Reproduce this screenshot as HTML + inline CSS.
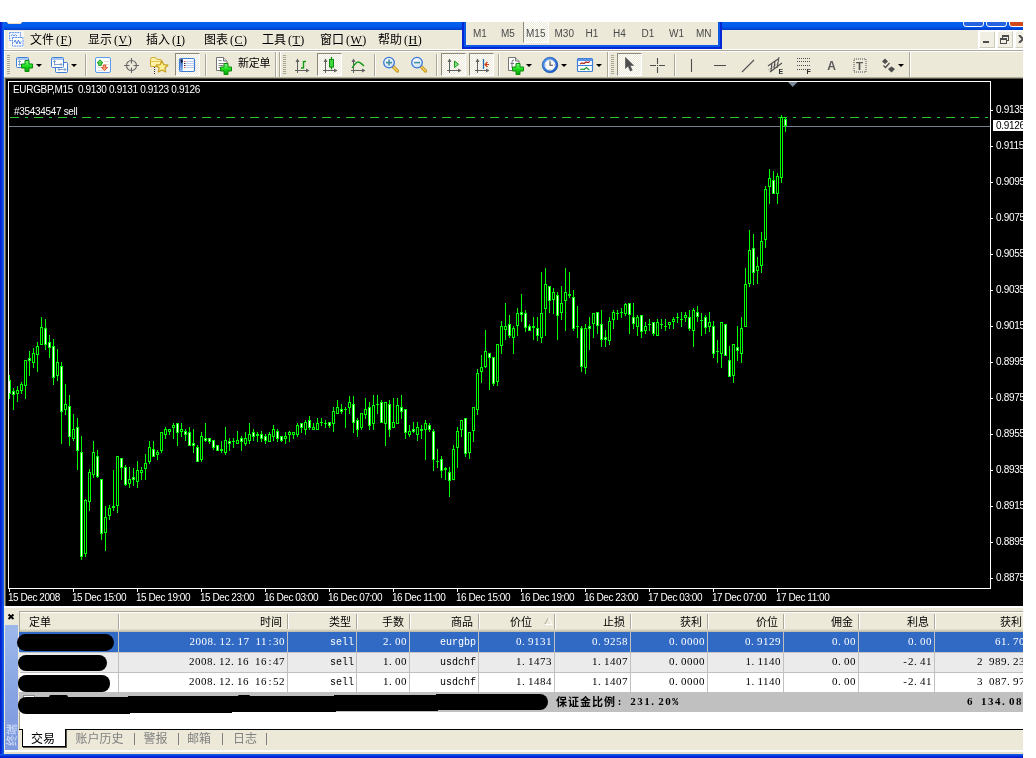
<!DOCTYPE html><html lang="zh"><head><meta charset="utf-8"><title>MetaTrader 4 - EURGBP,M15</title><style>
*{box-sizing:border-box;margin:0;padding:0}
html,body{width:1036px;height:758px;background:#fff;overflow:hidden}
body{position:relative;font-family:"Liberation Sans","Noto Sans CJK SC",sans-serif;font-size:11px;color:#000}
#app{will-change:transform;position:absolute;left:0;top:22px;width:1023px;height:736px;background:#ece9d8;overflow:hidden}
.abs{position:absolute}
.menu span{position:absolute;top:11px;font:12px/14px "Liberation Serif","Noto Sans CJK SC",sans-serif;white-space:nowrap;color:#000}
.menu span i{font-style:normal;font-family:"Liberation Serif",serif;font-size:12px;letter-spacing:.5px;margin-left:2px}
.menu span u{text-decoration:underline}
.tf span{position:absolute;top:6px;font:10px/12px "Liberation Sans",sans-serif;color:#4a4a4a;white-space:nowrap}
.hatch{position:absolute;background-color:#fff;background-image:conic-gradient(#ece9d8 25%,#fff 0 50%,#ece9d8 0 75%,#fff 0);background-size:2px 2px;border:1px solid;border-color:#8d8a7c #fff #fff #8d8a7c}
.vsep{position:absolute;top:32px;width:2px;height:22px;border-left:1px solid #aca899;border-right:1px solid #fdfdf8}
.grip{position:absolute;top:33px;width:3px;height:20px;background:repeating-linear-gradient(#a9a696 0 1px,#ece9d8 1px 2px)}
.dd{position:absolute;top:42px;width:0;height:0;border:3px solid transparent;border-top-color:#000;border-bottom-width:0}
.ct{position:absolute;font:10px/12px "Liberation Sans",sans-serif;letter-spacing:-.32px;color:#fff;white-space:nowrap}
.th{position:absolute;top:589px;height:20px;font:11px/22px "Liberation Sans","Noto Sans CJK SC",sans-serif;text-align:right;padding-right:6px;white-space:nowrap}
.th:after{content:"";box-sizing:border-box;position:absolute;right:-1px;top:3px;height:15px;width:2px;border-left:1px solid #aca899;border-right:1px solid #fff}
.row{position:absolute;left:19px;width:1004px;height:20px}
.td{position:absolute;top:0;height:20px;font:10px/22px "Liberation Mono","Noto Sans CJK SC",monospace;text-align:right;padding-right:2px;white-space:pre;border-right:1px solid #c0c0c0}
.d{font:normal 11px/22px "Liberation Serif",serif;letter-spacing:.5px;position:relative;top:-2px}.p{letter-spacing:3.25px}.c{letter-spacing:0;margin:0 1.47px}.m{letter-spacing:0;margin:0 1.17px}.e{font-weight:bold;letter-spacing:1.5px}.e.p{letter-spacing:4.25px}.e.c{letter-spacing:0;margin:0 1.84px 0 1.84px}
.blob{position:absolute;background:#000}
.tab{position:absolute;top:710px;font:12px/14px "Liberation Sans","Noto Sans CJK SC",sans-serif;color:#808080;white-space:nowrap}
</style></head><body><div id="app"><div class="abs" style="left:0;top:0;width:1023px;height:8px;background:linear-gradient(#0562f0 0,#0058ea 60%,#0047d8 85%,#003cc6 100%)"></div><div class="abs" style="left:0;top:0;width:4px;height:736px;background:linear-gradient(90deg,#0019cf,#0831d9 40%,#166aee)"></div><div class="abs" style="left:4px;top:8px;width:1px;height:724px;background:#fff"></div><div class="abs" style="left:0;top:732px;width:1023px;height:4px;background:linear-gradient(#166aee,#0831d9 50%,#0019cf)"></div><div class="abs" style="left:7px;top:-6px;width:15px;height:8px;background:#fff;border:1px solid #f0dcc0;border-radius:2px"></div><div class="abs" style="left:963px;top:-16px;width:21px;height:21px;background:#2663e0;border:1px solid #fff;border-radius:3px"></div><div class="abs" style="left:986px;top:-16px;width:21px;height:21px;background:#2663e0;border:1px solid #fff;border-radius:3px"></div><div class="abs" style="left:1009px;top:-16px;width:21px;height:21px;background:#d2481c;border:1px solid #fff;border-radius:3px"></div><div class="menu abs" style="left:0;top:0;width:1023px;height:28px"><span style="left:30px">文件<i>(<u>F</u>)</i></span><span style="left:88px">显示<i>(<u>V</u>)</i></span><span style="left:146px">插入<i>(<u>I</u>)</i></span><span style="left:204px">图表<i>(<u>C</u>)</i></span><span style="left:262px">工具<i>(<u>T</u>)</i></span><span style="left:320px">窗口<i>(<u>W</u>)</i></span><span style="left:378px">帮助<i>(<u>H</u>)</i></span></div><svg class="abs" style="left:8px;top:9px" width="16" height="17" viewBox="0 0 16 17"><rect x="0" y="0" width="16" height="17" fill="#f8f7f3"/><rect x="1.5" y="1.5" width="11" height="8" fill="#eef3ff" stroke="#6a9bec" stroke-dasharray="2 .6"/><path d="M3 5l1.500-1.500 1.500 1.500 1.500-1.500 1.500 1.500" fill="none" stroke="#5b8fe6" stroke-width=".9"/><rect x="4.5" y="6.5" width="10.500" height="8.500" fill="#fff" stroke="#5b8fe6" stroke-dasharray="2 .6"/><path d="M6 11.500l1.300-2.500 1.500 4 1.700-4 1.500 4 1.300-2.500" fill="none" stroke="#4f86e0" stroke-width="1"/></svg><div class="abs" style="left:978px;top:8px;width:45px;height:19px;background:#fff"></div><div class="abs" style="left:979px;top:9px;width:16px;height:17px;background:#f1efe4;border:1px solid;border-color:#fff #d0ccbc #d0ccbc #fff"></div><div class="abs" style="left:997px;top:9px;width:16px;height:17px;background:#f1efe4;border:1px solid;border-color:#fff #d0ccbc #d0ccbc #fff"></div><div class="abs" style="left:1015px;top:9px;width:16px;height:17px;background:#f1efe4;border:1px solid;border-color:#fff #d0ccbc #d0ccbc #fff"></div><div class="abs" style="left:983px;top:19px;width:6px;height:2px;background:#4d4d4d"></div><div class="abs" style="left:1002px;top:13px;width:7px;height:6px;border:1px solid #4d4d4d;border-top-width:2px"></div><div class="abs" style="left:1000px;top:16px;width:7px;height:6px;border:1px solid #4d4d4d;border-top-width:2px;background:#f1efe4"></div><svg class="abs" style="left:1018px;top:13px" width="8" height="8"><path d="M1 0l4 4-4 4" fill="none" stroke="#4d4d4d" stroke-width="2"/></svg><div class="abs" style="left:4px;top:27px;width:1019px;height:3px;background:#fff;border-top:0"></div><div class="abs" style="left:4px;top:28px;width:1019px;height:1px;background:#aca899"></div><div class="abs" style="left:462px;top:0;width:260px;height:27px;background:#0426d4"><div class="abs" style="left:2px;top:0;width:256px;height:25px;background:#0d58e6"></div><div class="tf abs" style="left:4px;top:0;width:252px;height:23px;background:#ece9d8"><div class="hatch" style="left:57px;top:-1px;width:26px;height:22px"></div><span style="left:7px">M1</span><span style="left:35px">M5</span><span style="left:60px">M15</span><span style="left:88.5px">M30</span><span style="left:119.5px">H1</span><span style="left:147px">H4</span><span style="left:175.5px">D1</span><span style="left:203px">W1</span><span style="left:230px">MN</span></div></div><div id="tb" class="abs" style="left:0;top:0;width:1023px;height:56px"><div class="grip" style="left:7px"></div><div class="grip" style="left:283px"></div><div class="grip" style="left:611px"></div><div class="vsep" style="left:85px"></div><div class="vsep" style="left:205px"></div><div class="vsep" style="left:374px"></div><div class="vsep" style="left:436px"></div><div class="vsep" style="left:498px"></div><div class="vsep" style="left:674px"></div><div class="abs" style="left:275px;top:30px;width:2px;height:25px;border-left:1px solid #aca899;border-right:1px solid #fff"></div><div class="abs" style="left:279px;top:30px;width:2px;height:25px;border-left:1px solid #aca899;border-right:1px solid #fff"></div><div class="abs" style="left:607px;top:30px;width:2px;height:25px;border-left:1px solid #aca899;border-right:1px solid #fff"></div><div class="abs" style="left:909px;top:30px;width:2px;height:25px;border-left:1px solid #aca899;border-right:1px solid #fff"></div><div class="dd" style="left:36px"></div><div class="dd" style="left:71px"></div><div class="dd" style="left:526px"></div><div class="dd" style="left:561px"></div><div class="dd" style="left:596px"></div><div class="dd" style="left:898px"></div><div class="hatch" style="left:175px;top:31px;width:25px;height:23px"></div><div class="hatch" style="left:317px;top:31px;width:25px;height:23px"></div><div class="hatch" style="left:441px;top:31px;width:25px;height:23px"></div><div class="hatch" style="left:469px;top:31px;width:25px;height:23px"></div><div class="hatch" style="left:617px;top:31px;width:25px;height:23px"></div></div><svg class="abs" style="left:0;top:29px" width="1023" height="27" viewBox="0 51 1023 27"><defs><linearGradient id="gp" x1="0" y1="0" x2="0" y2="1"><stop offset="0" stop-color="#7dff7d"/><stop offset=".5" stop-color="#1fdc1f"/><stop offset="1" stop-color="#0aa00a"/></linearGradient><linearGradient id="bl" x1="0" y1="0" x2="0" y2="1"><stop offset="0" stop-color="#9cc4f7"/><stop offset="1" stop-color="#3d7fdc"/></linearGradient><radialGradient id="lens" cx=".4" cy=".35" r=".7"><stop offset="0" stop-color="#fff"/><stop offset="1" stop-color="#c6dcf7"/></radialGradient></defs><rect x="16.5" y="57.5" width="12" height="10" rx="1" fill="#fff" stroke="#3f7fd6"/><rect x="17" y="58" width="11" height="2" fill="#a9c8f3"/><path d="M19.5 60.5v5M18 62l1.5-1.5L21 62M18 64l1.5 1.5L21 64" stroke="#7f9fc4" fill="none"/><path d="M25.0 60.5h4v3.500h3.500v4h-3.500v3.500h-4v-3.500h-3.500v-4h3.500z" fill="url(#gp)" stroke="#0b8a0b" stroke-width="1" stroke-linejoin="round"/><rect x="55.500" y="62.500" width="12" height="10" rx="1" fill="#fff" stroke="#3f7fd6"/><path d="M58 69.500h8M58 69.500l1.500-1.500M58 69.500l1.500 1.500M66 69.500l-1.500-1.500M66 69.500l-1.500 1.500" stroke="#7f9fc4" fill="none"/><rect x="51.500" y="57.500" width="12" height="10" rx="1" fill="#fff" stroke="#3f7fd6"/><rect x="52" y="58" width="11" height="2" fill="#a9c8f3"/><path d="M54.500 60.500v5M53 62l1.500-1.500L56 62M54 64.500h8M60.500 63l1.500 1.500-1.500 1.500" stroke="#7f9fc4" fill="none"/><rect x="95.500" y="57.500" width="15" height="15" rx="1.500" fill="#fff" stroke="#5b9bee"/><path d="M104 61.500h5M104 64.500h5M98 67.500h4M98 70.500h5" stroke="#dcdcdc"/><path d="M100 59.800l3 3.200h-1.700v2.500h-2.600v-2.500h-1.700z" fill="#5fd05f" stroke="#109a10" stroke-width=".9"/><path d="M104.500 70.700l-3-3.200h1.700v-2.500h2.600v2.500h1.700z" fill="#f6a080" stroke="#e0481a" stroke-width=".9"/><circle cx="131.500" cy="65.500" r="5" fill="none" stroke="#666" stroke-width="1.100"/><path d="M131.500 58v5.500M131.500 67.500v5.500M124 65.500h5.500M133.500 65.500h5.500" stroke="#666" stroke-width="1.100"/><path d="M150.500 59.500q0-2 2-2h3l1.500 2h4v7h-10.500z" fill="#fdf2a8" stroke="#cfa92e"/><path d="M150.500 61.500h10.500" stroke="#e0c255"/><path d="M154.500 67v7" stroke="#333" stroke-dasharray="1 1"/><path d="M162 61l1.800 3.700 4.100.5-3 2.800.8 4-3.700-2-3.700 2 .8-4-3-2.800 4.100-.5z" fill="#fdf09a" stroke="#c9a01c" stroke-width="1.200" stroke-linejoin="round"/><defs><linearGradient id="tc" x1="0" y1="0" x2="0" y2="1"><stop offset="0" stop-color="#10245c"/><stop offset=".35" stop-color="#3d6fc8"/><stop offset="1" stop-color="#7fb0f0"/></linearGradient></defs><rect x="179.500" y="58.500" width="15" height="13" rx="1.500" fill="#fff" stroke="#3f7fd6" stroke-width="1.200"/><rect x="180.200" y="59.200" width="2.600" height="11.600" fill="url(#tc)"/><rect x="181" y="60" width="1.400" height="2.500" fill="#111"/><path d="M185.500 61.500h8.500M185.500 63.500h8.500M185.500 65.500h8.500M185.500 67.500h8.500" stroke="#b9cdf0"/><path d="M184 61.500h1.300M184 67.500h1.300" stroke="#e8502a"/><path d="M184 63.500h1.300M184 65.500h1.300" stroke="#222"/><path d="M216.500 57.500h7l3.500 3.500v9.500h-10.500z" fill="#fff" stroke="#747474"/><path d="M223.500 57.500v3.500h3.500" fill="#ddd" stroke="#747474"/><path d="M218.500 60.500h3M218.500 63.500h6M218.500 65.500h5M218.500 67.500h3" stroke="#858585"/><path d="M224.0 63.5h4v3.500h3.500v4h-3.500v3.500h-4v-3.500h-3.500v-4h3.500z" fill="url(#gp)" stroke="#0b8a0b" stroke-width="1" stroke-linejoin="round"/><path d="M297.5 59V73M295 70.5H308" stroke="#606060" stroke-width="1" fill="none"/><path d="M295.5 62l2-3.5 2 3.5zM306 68.5l3.5 2-3.5 2z" fill="#606060"/><path d="M303.500 61v7.500M303.500 61.500h2.500M301 68h2.500" stroke="#169a16" stroke-width="1.400" fill="none"/><path d="M325.5 59V73M323 70.5H336" stroke="#606060" stroke-width="1" fill="none"/><path d="M323.5 62l2-3.5 2 3.5zM334 68.5l3.5 2-3.5 2z" fill="#606060"/><path d="M331.500 57v12.500" stroke="#0d8a0d" stroke-width="1.300"/><rect x="329.500" y="59.500" width="4" height="7.500" fill="#3fd83f" stroke="#0d8a0d"/><path d="M353.5 59V73M351 70.5H364" stroke="#606060" stroke-width="1" fill="none"/><path d="M351.5 62l2-3.5 2 3.5zM362 68.5l3.5 2-3.5 2z" fill="#606060"/><path d="M352 68q4-6 6-6t6 4" stroke="#169a16" stroke-width="1.300" fill="none"/><path d="M393 66.5l4.500 4.500" stroke="#c79a1c" stroke-width="3.200" stroke-linecap="round"/><path d="M393.3 66.8l4 4" stroke="#f3d467" stroke-width="1.300" stroke-linecap="round"/><circle cx="389" cy="62.600" r="5.300" fill="url(#lens)" stroke="#3b78d8" stroke-width="1.300"/><path d="M386 62.600h6M389 59.600v6" stroke="#3f8f9f" stroke-width="1.600"/><path d="M421 66.5l4.500 4.500" stroke="#c79a1c" stroke-width="3.200" stroke-linecap="round"/><path d="M421.3 66.8l4 4" stroke="#f3d467" stroke-width="1.300" stroke-linecap="round"/><circle cx="417" cy="62.600" r="5.300" fill="url(#lens)" stroke="#3b78d8" stroke-width="1.300"/><path d="M414 62.600h6" stroke="#3f8f9f" stroke-width="1.600"/><path d="M449.5 59V73M447 70.5H460" stroke="#606060" stroke-width="1" fill="none"/><path d="M447.5 62l2-3.5 2 3.5zM458 68.5l3.5 2-3.5 2z" fill="#606060"/><path d="M454.500 61l4 3.300-4 3.300z" fill="#7ee07e" stroke="#169a16"/><path d="M477.5 59V73M475 70.5H488" stroke="#606060" stroke-width="1" fill="none"/><path d="M475.5 62l2-3.5 2 3.5zM486 68.5l3.5 2-3.5 2z" fill="#606060"/><path d="M483.500 59v10" stroke="#1f6fae" stroke-width="1.300"/><path d="M484.500 64.500h4.500M487.500 62l-2.500 2.500 2.500 2.500" stroke="#d43a12" stroke-width="1.200" fill="none"/><path d="M508.500 57.500h7l3.500 3.500v9.500h-10.500z" fill="#fff" stroke="#747474"/><path d="M515.500 57.500v3.500h3.500" fill="#ddd" stroke="#747474"/><path d="M514 60q-2-.5-2 2v6M510.500 63.500h3.500" stroke="#777" fill="none"/><path d="M516.0 63.5h4v3.500h3.500v4h-3.500v3.500h-4v-3.500h-3.500v-4h3.500z" fill="url(#gp)" stroke="#0b8a0b" stroke-width="1" stroke-linejoin="round"/><defs><linearGradient id="ck" x1="0" y1="0" x2="1" y2="1"><stop offset="0" stop-color="#5aa2f5"/><stop offset="1" stop-color="#0f4fc0"/></linearGradient></defs><circle cx="550" cy="65" r="7.800" fill="url(#ck)" stroke="#0c3f9e" stroke-width=".6"/><circle cx="550" cy="65" r="5.300" fill="#fbfbfb" stroke="#d0d8e8" stroke-width=".6"/><path d="M550 61.300v3.900h3" stroke="#444" stroke-width="1.100" fill="none"/><path d="M550 60.300v.8M550 69v.8M545.300 65h.8M554 65h.8" stroke="#888" stroke-width=".8"/><rect x="577.500" y="58.500" width="15" height="13" rx="1" fill="#fff" stroke="#3f7fd6" stroke-width="1.200"/><rect x="578" y="59" width="14" height="2" fill="#5b93e6"/><path d="M578 65.500h14" stroke="#3f7fd6"/><path d="M580 64l2-1 2 .500 2-1.500 2 .500 2-1" stroke="#a8281a" stroke-width="1.200" fill="none"/><path d="M580 69.500l2-.500 2 .500 2.500-2 2 2 1 .500" stroke="#1a9a2a" stroke-width="1.200" fill="none"/><path d="M625.500 57.500v11l2.600-2.400 2.200 5 1.900-.9-2.200-4.800h3.600z" fill="#4d4d4d" stroke="#4d4d4d" stroke-width=".6" stroke-linejoin="round"/><path d="M657.500 58v6M657.500 67v6M650 65.500h6M659 65.500h6" stroke="#4d4d4d" stroke-width="1.100"/><rect x="657" y="65" width="1" height="1" fill="#4d4d4d"/><path d="M691.500 59v13M714 65.500h12" stroke="#4d4d4d" stroke-width="1.100"/><path d="M742 72l12-12" stroke="#505050" stroke-width="1.100"/><path d="M768 66l10-7M770 72l12-9M772 63l-1 8M775 61l-1 8M779 57l-2 11" stroke="#4d4d4d" stroke-width="1.100" fill="none"/><path d="M768.500 70l10-7" stroke="#4d4d4d" stroke-width=".8" stroke-dasharray="1 1"/><text x="778.500" y="74" font-family="Liberation Sans,sans-serif" font-size="7" font-weight="bold" fill="#333">E</text><path d="M797 58.500h13M797 61.500h13M797 65.500h13M797 69.500h9" stroke="#4d4d4d" stroke-width="1" stroke-dasharray="1 1"/><text x="806.500" y="74" font-family="Liberation Sans,sans-serif" font-size="7" font-weight="bold" fill="#333">F</text><text x="827.300" y="70" font-family="Liberation Sans,sans-serif" font-size="12" font-weight="bold" fill="#5a5a5a">A</text><rect x="854" y="59" width="12" height="13" fill="none" stroke="#4d4d4d" stroke-dasharray="1 1"/><text x="856" y="70.300" font-family="Liberation Sans,sans-serif" font-size="11.500" font-weight="bold" fill="#555">T</text><path d="M885 58.500l3 3-3 2.500-3-2.500zM891.500 66.500l3.500 2.500-3.500 3.500-3.500-3.500z" fill="#4d4d4d"/><path d="M883.500 65.500l2 2 4-4.500" stroke="#4d4d4d" stroke-width="1.300" fill="none"/></svg><div class="abs" style="left:238px;top:35px;font:400 11px/13px 'Liberation Sans','Noto Sans CJK SC',sans-serif;letter-spacing:-.3px;white-space:nowrap">新定单</div><div class="abs" style="left:4px;top:55px;width:1019px;height:529px;background:#b3af9b"></div><div class="abs" style="left:5px;top:56px;width:1018px;height:528px;background:#000;border-left:1px solid #5a584e;border-top:1px solid #5a584e"></div><svg class="abs" style="left:0;top:56px" width="1023" height="528" viewBox="0 78 1023 528" shape-rendering="crispEdges"><rect x="8.5" y="81.5" width="982" height="507" fill="none" stroke="#fff" stroke-width="1"/><path d="M788 82h9.500l-4.750 5z" fill="#778899" shape-rendering="auto"/><rect x="9" y="126" width="981" height="1" fill="#708090"/><path d="M10 117.5H990" stroke="#28c828" stroke-width="1" stroke-dasharray="9 6 3 6" fill="none"/><path d="M9.5 375V399 M13.5 388V410 M17.5 386V402 M21.5 382V394 M25.5 360V399 M29.5 351V376 M33.5 348V368 M37.5 342V372 M41.5 317V345 M45.5 319V350 M49.5 335V358 M53.5 339V385 M57.5 349V381 M61.5 362V444 M65.5 384V415 M69.5 395V446 M73.5 414V441 M77.5 418V470 M81.5 436V560 M85.5 499V557 M89.5 469V511 M93.5 441V478 M97.5 450V478 M101.5 479V540 M105.5 506V551 M109.5 505V520 M113.5 470V511 M117.5 456V513 M121.5 458V480 M125.5 465V486 M129.5 467V488 M133.5 468V486 M137.5 461V488 M141.5 467V480 M145.5 454V480 M149.5 441V464 M153.5 441V457 M157.5 450V460 M161.5 432V453 M165.5 427V439 M169.5 429V435 M173.5 423V439 M177.5 423V446 M181.5 423V437 M185.5 429V441 M189.5 427V446 M193.5 429V453 M197.5 445V462 M201.5 432V462 M205.5 423V442 M209.5 438V444 M213.5 440V450 M217.5 445V451 M221.5 441V453 M225.5 427V455 M229.5 438V451 M233.5 438V448 M237.5 431V444 M241.5 436V451 M245.5 432V446 M249.5 423V444 M253.5 429V441 M257.5 432V442 M261.5 431V442 M265.5 434V444 M269.5 432V442 M273.5 425V441 M277.5 429V442 M281.5 436V442 M285.5 432V444 M289.5 431V442 M293.5 432V439 M297.5 423V437 M301.5 423V433 M305.5 420V435 M309.5 416V430 M313.5 423V430 M317.5 418V430 M321.5 418V426 M325.5 420V428 M329.5 422V428 M333.5 407V432 M337.5 400V414 M341.5 404V414 M345.5 407V428 M349.5 396V414 M353.5 396V433 M357.5 418V437 M361.5 413V430 M365.5 398V419 M369.5 402V430 M373.5 395V430 M377.5 395V414 M381.5 400V423 M385.5 402V446 M389.5 400V437 M393.5 398V428 M397.5 398V424 M401.5 395V419 M405.5 409V439 M409.5 425V437 M413.5 422V433 M417.5 422V441 M421.5 425V439 M425.5 420V460 M429.5 423V432 M433.5 429V471 M437.5 449V468 M441.5 456V478 M445.5 467V480 M449.5 467V497 M453.5 445V480 M457.5 427V468 M461.5 420V437 M465.5 418V457 M469.5 432V459 M473.5 407V442 M477.5 369V415 M481.5 355V383 M485.5 330V368 M489.5 353V390 M493.5 357V386 M497.5 344V386 M501.5 321V354 M505.5 303V340 M509.5 315V338 M513.5 326V354 M517.5 308V336 M521.5 294V322 M525.5 310V332 M529.5 324V331 M533.5 317V340 M537.5 317V341 M541.5 272V343 M545.5 268V336 M549.5 286V313 M553.5 288V314 M557.5 292V340 M561.5 286V320 M565.5 268V331 M569.5 272V298 M573.5 290V331 M577.5 306V338 M581.5 326V372 M585.5 324V374 M589.5 317V350 M593.5 313V338 M597.5 312V334 M601.5 310V347 M605.5 330V347 M609.5 317V345 M613.5 310V329 M617.5 310V320 M621.5 308V318 M625.5 303V316 M629.5 303V334 M633.5 303V329 M637.5 315V336 M641.5 315V338 M645.5 322V334 M649.5 319V331 M653.5 322V336 M657.5 319V336 M661.5 319V329 M665.5 319V331 M669.5 322V329 M673.5 317V329 M677.5 313V323 M681.5 312V327 M685.5 312V322 M689.5 310V331 M693.5 308V347 M697.5 306V322 M701.5 313V336 M705.5 315V334 M709.5 312V332 M713.5 321V358 M717.5 340V363 M721.5 322V368 M725.5 324V356 M729.5 346V377 M733.5 344V383 M737.5 326V361 M741.5 317V363 M745.5 268V327 M749.5 230V287 M753.5 234V285 M757.5 257V284 M761.5 232V273 M765.5 186V248 M769.5 169V204 M773.5 171V194 M777.5 173V204 M781.5 115V183 M785.5 117V132" stroke="#00ff00" stroke-width="1" fill="none"/><rect x="9" y="380" width="2" height="14" fill="#00ff00"/><rect x="9" y="381" width="1" height="12" fill="#fff"/><rect x="12" y="391" width="3" height="4" fill="#00ff00"/><rect x="13" y="392" width="1" height="2" fill="#fff"/><rect x="16" y="390" width="3" height="4" fill="#00ff00"/><rect x="17" y="391" width="1" height="2" fill="#000"/><rect x="20" y="384" width="3" height="7" fill="#00ff00"/><rect x="21" y="385" width="1" height="5" fill="#000"/><rect x="24" y="360" width="3" height="26" fill="#00ff00"/><rect x="25" y="361" width="1" height="24" fill="#000"/><rect x="28" y="358" width="3" height="3" fill="#00ff00"/><rect x="29" y="359" width="1" height="1" fill="#fff"/><rect x="32" y="353" width="3" height="10" fill="#00ff00"/><rect x="33" y="354" width="1" height="8" fill="#000"/><rect x="36" y="346" width="3" height="9" fill="#00ff00"/><rect x="37" y="347" width="1" height="7" fill="#000"/><rect x="40" y="327" width="3" height="18" fill="#00ff00"/><rect x="41" y="328" width="1" height="16" fill="#000"/><rect x="44" y="328" width="3" height="17" fill="#00ff00"/><rect x="45" y="329" width="1" height="15" fill="#fff"/><rect x="48" y="342" width="3" height="6" fill="#00ff00"/><rect x="49" y="343" width="1" height="4" fill="#fff"/><rect x="52" y="346" width="3" height="32" fill="#00ff00"/><rect x="53" y="347" width="1" height="30" fill="#fff"/><rect x="56" y="362" width="3" height="14" fill="#00ff00"/><rect x="57" y="363" width="1" height="12" fill="#000"/><rect x="60" y="366" width="3" height="46" fill="#00ff00"/><rect x="61" y="367" width="1" height="44" fill="#fff"/><rect x="64" y="404" width="3" height="6" fill="#00ff00"/><rect x="65" y="405" width="1" height="4" fill="#000"/><rect x="68" y="406" width="3" height="31" fill="#00ff00"/><rect x="69" y="407" width="1" height="29" fill="#fff"/><rect x="72" y="429" width="3" height="10" fill="#00ff00"/><rect x="73" y="430" width="1" height="8" fill="#000"/><rect x="76" y="427" width="3" height="24" fill="#00ff00"/><rect x="77" y="428" width="1" height="22" fill="#fff"/><rect x="80" y="452" width="3" height="105" fill="#00ff00"/><rect x="81" y="453" width="1" height="103" fill="#fff"/><rect x="84" y="500" width="3" height="54" fill="#00ff00"/><rect x="85" y="501" width="1" height="52" fill="#000"/><rect x="88" y="472" width="3" height="30" fill="#00ff00"/><rect x="89" y="473" width="1" height="28" fill="#000"/><rect x="92" y="452" width="3" height="23" fill="#00ff00"/><rect x="93" y="453" width="1" height="21" fill="#000"/><rect x="96" y="456" width="3" height="21" fill="#00ff00"/><rect x="97" y="457" width="1" height="19" fill="#fff"/><rect x="100" y="479" width="3" height="55" fill="#00ff00"/><rect x="101" y="480" width="1" height="53" fill="#fff"/><rect x="104" y="517" width="3" height="16" fill="#00ff00"/><rect x="105" y="518" width="1" height="14" fill="#000"/><rect x="108" y="508" width="3" height="8" fill="#00ff00"/><rect x="109" y="509" width="1" height="6" fill="#000"/><rect x="112" y="506" width="3" height="2" fill="#00ff00"/><rect x="116" y="456" width="3" height="50" fill="#00ff00"/><rect x="117" y="457" width="1" height="48" fill="#000"/><rect x="120" y="458" width="3" height="10" fill="#00ff00"/><rect x="121" y="459" width="1" height="8" fill="#fff"/><rect x="124" y="467" width="3" height="18" fill="#00ff00"/><rect x="125" y="468" width="1" height="16" fill="#fff"/><rect x="128" y="479" width="3" height="5" fill="#00ff00"/><rect x="129" y="480" width="1" height="3" fill="#000"/><rect x="132" y="477" width="3" height="3" fill="#00ff00"/><rect x="133" y="478" width="1" height="1" fill="#fff"/><rect x="136" y="470" width="3" height="12" fill="#00ff00"/><rect x="137" y="471" width="1" height="10" fill="#000"/><rect x="140" y="470" width="3" height="3" fill="#00ff00"/><rect x="141" y="471" width="1" height="1" fill="#000"/><rect x="144" y="463" width="3" height="6" fill="#00ff00"/><rect x="145" y="464" width="1" height="4" fill="#000"/><rect x="148" y="447" width="3" height="15" fill="#00ff00"/><rect x="149" y="448" width="1" height="13" fill="#000"/><rect x="152" y="449" width="3" height="8" fill="#00ff00"/><rect x="153" y="450" width="1" height="6" fill="#fff"/><rect x="156" y="452" width="3" height="3" fill="#00ff00"/><rect x="157" y="453" width="1" height="1" fill="#000"/><rect x="160" y="432" width="3" height="19" fill="#00ff00"/><rect x="161" y="433" width="1" height="17" fill="#000"/><rect x="164" y="429" width="3" height="6" fill="#00ff00"/><rect x="165" y="430" width="1" height="4" fill="#000"/><rect x="168" y="429" width="3" height="3" fill="#00ff00"/><rect x="169" y="430" width="1" height="1" fill="#000"/><rect x="172" y="425" width="3" height="3" fill="#00ff00"/><rect x="173" y="426" width="1" height="1" fill="#000"/><rect x="176" y="423" width="3" height="10" fill="#00ff00"/><rect x="177" y="424" width="1" height="8" fill="#fff"/><rect x="180" y="429" width="3" height="3" fill="#00ff00"/><rect x="181" y="430" width="1" height="1" fill="#000"/><rect x="184" y="431" width="3" height="4" fill="#00ff00"/><rect x="185" y="432" width="1" height="2" fill="#fff"/><rect x="188" y="432" width="3" height="14" fill="#00ff00"/><rect x="189" y="433" width="1" height="12" fill="#fff"/><rect x="192" y="443" width="3" height="3" fill="#00ff00"/><rect x="193" y="444" width="1" height="1" fill="#fff"/><rect x="196" y="447" width="3" height="15" fill="#00ff00"/><rect x="197" y="448" width="1" height="13" fill="#fff"/><rect x="200" y="436" width="3" height="24" fill="#00ff00"/><rect x="201" y="437" width="1" height="22" fill="#000"/><rect x="204" y="438" width="3" height="3" fill="#00ff00"/><rect x="205" y="439" width="1" height="1" fill="#fff"/><rect x="208" y="438" width="3" height="4" fill="#00ff00"/><rect x="209" y="439" width="1" height="2" fill="#fff"/><rect x="212" y="440" width="3" height="8" fill="#00ff00"/><rect x="213" y="441" width="1" height="6" fill="#fff"/><rect x="216" y="445" width="3" height="6" fill="#00ff00"/><rect x="217" y="446" width="1" height="4" fill="#fff"/><rect x="220" y="449" width="3" height="2" fill="#00ff00"/><rect x="224" y="440" width="3" height="13" fill="#00ff00"/><rect x="225" y="441" width="1" height="11" fill="#000"/><rect x="228" y="441" width="3" height="3" fill="#00ff00"/><rect x="229" y="442" width="1" height="1" fill="#fff"/><rect x="232" y="441" width="3" height="1" fill="#00ff00"/><rect x="236" y="440" width="3" height="4" fill="#00ff00"/><rect x="237" y="441" width="1" height="2" fill="#000"/><rect x="240" y="438" width="3" height="4" fill="#00ff00"/><rect x="241" y="439" width="1" height="2" fill="#fff"/><rect x="244" y="438" width="3" height="6" fill="#00ff00"/><rect x="245" y="439" width="1" height="4" fill="#000"/><rect x="248" y="434" width="3" height="7" fill="#00ff00"/><rect x="249" y="435" width="1" height="5" fill="#000"/><rect x="252" y="432" width="3" height="5" fill="#00ff00"/><rect x="253" y="433" width="1" height="3" fill="#fff"/><rect x="256" y="434" width="3" height="2" fill="#00ff00"/><rect x="260" y="434" width="3" height="5" fill="#00ff00"/><rect x="261" y="435" width="1" height="3" fill="#fff"/><rect x="264" y="436" width="3" height="5" fill="#00ff00"/><rect x="265" y="437" width="1" height="3" fill="#fff"/><rect x="268" y="434" width="3" height="8" fill="#00ff00"/><rect x="269" y="435" width="1" height="6" fill="#000"/><rect x="272" y="429" width="3" height="8" fill="#00ff00"/><rect x="273" y="430" width="1" height="6" fill="#000"/><rect x="276" y="431" width="3" height="8" fill="#00ff00"/><rect x="277" y="432" width="1" height="6" fill="#fff"/><rect x="280" y="436" width="3" height="5" fill="#00ff00"/><rect x="281" y="437" width="1" height="3" fill="#fff"/><rect x="284" y="436" width="3" height="3" fill="#00ff00"/><rect x="285" y="437" width="1" height="1" fill="#000"/><rect x="288" y="432" width="3" height="3" fill="#00ff00"/><rect x="289" y="433" width="1" height="1" fill="#000"/><rect x="292" y="432" width="3" height="3" fill="#00ff00"/><rect x="293" y="433" width="1" height="1" fill="#000"/><rect x="296" y="425" width="3" height="10" fill="#00ff00"/><rect x="297" y="426" width="1" height="8" fill="#000"/><rect x="300" y="423" width="3" height="5" fill="#00ff00"/><rect x="301" y="424" width="1" height="3" fill="#fff"/><rect x="304" y="422" width="3" height="8" fill="#00ff00"/><rect x="305" y="423" width="1" height="6" fill="#000"/><rect x="308" y="420" width="3" height="8" fill="#00ff00"/><rect x="309" y="421" width="1" height="6" fill="#fff"/><rect x="312" y="427" width="3" height="3" fill="#00ff00"/><rect x="313" y="428" width="1" height="1" fill="#000"/><rect x="316" y="423" width="3" height="7" fill="#00ff00"/><rect x="317" y="424" width="1" height="5" fill="#000"/><rect x="320" y="422" width="3" height="1" fill="#00ff00"/><rect x="324" y="423" width="3" height="1" fill="#00ff00"/><rect x="328" y="422" width="3" height="4" fill="#00ff00"/><rect x="329" y="423" width="1" height="2" fill="#fff"/><rect x="332" y="411" width="3" height="13" fill="#00ff00"/><rect x="333" y="412" width="1" height="11" fill="#000"/><rect x="336" y="407" width="3" height="7" fill="#00ff00"/><rect x="337" y="408" width="1" height="5" fill="#000"/><rect x="340" y="409" width="3" height="3" fill="#00ff00"/><rect x="341" y="410" width="1" height="1" fill="#fff"/><rect x="344" y="409" width="3" height="1" fill="#00ff00"/><rect x="348" y="402" width="3" height="6" fill="#00ff00"/><rect x="349" y="403" width="1" height="4" fill="#000"/><rect x="352" y="404" width="3" height="19" fill="#00ff00"/><rect x="353" y="405" width="1" height="17" fill="#fff"/><rect x="356" y="420" width="3" height="10" fill="#00ff00"/><rect x="357" y="421" width="1" height="8" fill="#fff"/><rect x="360" y="413" width="3" height="15" fill="#00ff00"/><rect x="361" y="414" width="1" height="13" fill="#000"/><rect x="364" y="409" width="3" height="6" fill="#00ff00"/><rect x="365" y="410" width="1" height="4" fill="#000"/><rect x="368" y="407" width="3" height="19" fill="#00ff00"/><rect x="369" y="408" width="1" height="17" fill="#fff"/><rect x="372" y="405" width="3" height="19" fill="#00ff00"/><rect x="373" y="406" width="1" height="17" fill="#000"/><rect x="376" y="404" width="3" height="1" fill="#00ff00"/><rect x="380" y="402" width="3" height="21" fill="#00ff00"/><rect x="381" y="403" width="1" height="19" fill="#fff"/><rect x="384" y="402" width="3" height="22" fill="#00ff00"/><rect x="385" y="403" width="1" height="20" fill="#000"/><rect x="388" y="404" width="3" height="26" fill="#00ff00"/><rect x="389" y="405" width="1" height="24" fill="#fff"/><rect x="392" y="422" width="3" height="6" fill="#00ff00"/><rect x="393" y="423" width="1" height="4" fill="#000"/><rect x="396" y="405" width="3" height="19" fill="#00ff00"/><rect x="397" y="406" width="1" height="17" fill="#000"/><rect x="400" y="407" width="3" height="5" fill="#00ff00"/><rect x="401" y="408" width="1" height="3" fill="#fff"/><rect x="404" y="409" width="3" height="24" fill="#00ff00"/><rect x="405" y="410" width="1" height="22" fill="#fff"/><rect x="408" y="431" width="3" height="4" fill="#00ff00"/><rect x="409" y="432" width="1" height="2" fill="#000"/><rect x="412" y="429" width="3" height="3" fill="#00ff00"/><rect x="413" y="430" width="1" height="1" fill="#fff"/><rect x="416" y="427" width="3" height="8" fill="#00ff00"/><rect x="417" y="428" width="1" height="6" fill="#000"/><rect x="420" y="429" width="3" height="2" fill="#00ff00"/><rect x="424" y="423" width="3" height="7" fill="#00ff00"/><rect x="425" y="424" width="1" height="5" fill="#000"/><rect x="428" y="425" width="3" height="5" fill="#00ff00"/><rect x="429" y="426" width="1" height="3" fill="#fff"/><rect x="432" y="431" width="3" height="29" fill="#00ff00"/><rect x="433" y="432" width="1" height="27" fill="#fff"/><rect x="436" y="461" width="3" height="1" fill="#00ff00"/><rect x="440" y="459" width="3" height="12" fill="#00ff00"/><rect x="441" y="460" width="1" height="10" fill="#fff"/><rect x="444" y="468" width="3" height="2" fill="#00ff00"/><rect x="448" y="472" width="3" height="9" fill="#00ff00"/><rect x="449" y="473" width="1" height="7" fill="#fff"/><rect x="452" y="449" width="3" height="31" fill="#00ff00"/><rect x="453" y="450" width="1" height="29" fill="#000"/><rect x="456" y="431" width="3" height="17" fill="#00ff00"/><rect x="457" y="432" width="1" height="15" fill="#000"/><rect x="460" y="420" width="3" height="10" fill="#00ff00"/><rect x="461" y="421" width="1" height="8" fill="#000"/><rect x="464" y="418" width="3" height="36" fill="#00ff00"/><rect x="465" y="419" width="1" height="34" fill="#fff"/><rect x="468" y="432" width="3" height="21" fill="#00ff00"/><rect x="469" y="433" width="1" height="19" fill="#000"/><rect x="472" y="407" width="3" height="24" fill="#00ff00"/><rect x="473" y="408" width="1" height="22" fill="#000"/><rect x="476" y="373" width="3" height="37" fill="#00ff00"/><rect x="477" y="374" width="1" height="35" fill="#000"/><rect x="480" y="367" width="3" height="5" fill="#00ff00"/><rect x="481" y="368" width="1" height="3" fill="#000"/><rect x="484" y="351" width="3" height="16" fill="#00ff00"/><rect x="485" y="352" width="1" height="14" fill="#000"/><rect x="488" y="353" width="3" height="5" fill="#00ff00"/><rect x="489" y="354" width="1" height="3" fill="#fff"/><rect x="492" y="357" width="3" height="27" fill="#00ff00"/><rect x="493" y="358" width="1" height="25" fill="#fff"/><rect x="496" y="344" width="3" height="38" fill="#00ff00"/><rect x="497" y="345" width="1" height="36" fill="#000"/><rect x="500" y="326" width="3" height="20" fill="#00ff00"/><rect x="501" y="327" width="1" height="18" fill="#000"/><rect x="504" y="326" width="3" height="4" fill="#00ff00"/><rect x="505" y="327" width="1" height="2" fill="#000"/><rect x="508" y="324" width="3" height="12" fill="#00ff00"/><rect x="509" y="325" width="1" height="10" fill="#fff"/><rect x="512" y="328" width="3" height="10" fill="#00ff00"/><rect x="513" y="329" width="1" height="8" fill="#000"/><rect x="516" y="313" width="3" height="13" fill="#00ff00"/><rect x="517" y="314" width="1" height="11" fill="#000"/><rect x="520" y="312" width="3" height="3" fill="#00ff00"/><rect x="521" y="313" width="1" height="1" fill="#fff"/><rect x="524" y="313" width="3" height="15" fill="#00ff00"/><rect x="525" y="314" width="1" height="13" fill="#fff"/><rect x="528" y="326" width="3" height="5" fill="#00ff00"/><rect x="529" y="327" width="1" height="3" fill="#fff"/><rect x="532" y="326" width="3" height="2" fill="#00ff00"/><rect x="536" y="328" width="3" height="8" fill="#00ff00"/><rect x="537" y="329" width="1" height="6" fill="#fff"/><rect x="540" y="313" width="3" height="25" fill="#00ff00"/><rect x="541" y="314" width="1" height="23" fill="#000"/><rect x="544" y="284" width="3" height="25" fill="#00ff00"/><rect x="545" y="285" width="1" height="23" fill="#000"/><rect x="548" y="286" width="3" height="15" fill="#00ff00"/><rect x="549" y="287" width="1" height="13" fill="#fff"/><rect x="552" y="292" width="3" height="8" fill="#00ff00"/><rect x="553" y="293" width="1" height="6" fill="#000"/><rect x="556" y="295" width="3" height="21" fill="#00ff00"/><rect x="557" y="296" width="1" height="19" fill="#fff"/><rect x="560" y="303" width="3" height="10" fill="#00ff00"/><rect x="561" y="304" width="1" height="8" fill="#000"/><rect x="564" y="292" width="3" height="9" fill="#00ff00"/><rect x="565" y="293" width="1" height="7" fill="#000"/><rect x="568" y="294" width="3" height="2" fill="#00ff00"/><rect x="572" y="297" width="3" height="32" fill="#00ff00"/><rect x="573" y="298" width="1" height="30" fill="#fff"/><rect x="576" y="326" width="3" height="1" fill="#00ff00"/><rect x="580" y="328" width="3" height="39" fill="#00ff00"/><rect x="581" y="329" width="1" height="37" fill="#fff"/><rect x="584" y="328" width="3" height="40" fill="#00ff00"/><rect x="585" y="329" width="1" height="38" fill="#000"/><rect x="588" y="326" width="3" height="3" fill="#00ff00"/><rect x="589" y="327" width="1" height="1" fill="#fff"/><rect x="592" y="313" width="3" height="11" fill="#00ff00"/><rect x="593" y="314" width="1" height="9" fill="#000"/><rect x="596" y="312" width="3" height="14" fill="#00ff00"/><rect x="597" y="313" width="1" height="12" fill="#fff"/><rect x="600" y="324" width="3" height="16" fill="#00ff00"/><rect x="601" y="325" width="1" height="14" fill="#fff"/><rect x="604" y="337" width="3" height="3" fill="#00ff00"/><rect x="605" y="338" width="1" height="1" fill="#fff"/><rect x="608" y="321" width="3" height="20" fill="#00ff00"/><rect x="609" y="322" width="1" height="18" fill="#000"/><rect x="612" y="312" width="3" height="8" fill="#00ff00"/><rect x="613" y="313" width="1" height="6" fill="#000"/><rect x="616" y="313" width="3" height="1" fill="#00ff00"/><rect x="620" y="312" width="3" height="1" fill="#00ff00"/><rect x="624" y="304" width="3" height="10" fill="#00ff00"/><rect x="625" y="305" width="1" height="8" fill="#000"/><rect x="628" y="303" width="3" height="12" fill="#00ff00"/><rect x="629" y="304" width="1" height="10" fill="#fff"/><rect x="632" y="317" width="3" height="7" fill="#00ff00"/><rect x="633" y="318" width="1" height="5" fill="#fff"/><rect x="636" y="317" width="3" height="10" fill="#00ff00"/><rect x="637" y="318" width="1" height="8" fill="#000"/><rect x="640" y="315" width="3" height="17" fill="#00ff00"/><rect x="641" y="316" width="1" height="15" fill="#fff"/><rect x="644" y="326" width="3" height="5" fill="#00ff00"/><rect x="645" y="327" width="1" height="3" fill="#000"/><rect x="648" y="324" width="3" height="1" fill="#00ff00"/><rect x="652" y="322" width="3" height="12" fill="#00ff00"/><rect x="653" y="323" width="1" height="10" fill="#fff"/><rect x="656" y="322" width="3" height="14" fill="#00ff00"/><rect x="657" y="323" width="1" height="12" fill="#000"/><rect x="660" y="324" width="3" height="1" fill="#00ff00"/><rect x="664" y="326" width="3" height="1" fill="#00ff00"/><rect x="668" y="322" width="3" height="3" fill="#00ff00"/><rect x="669" y="323" width="1" height="1" fill="#000"/><rect x="672" y="319" width="3" height="3" fill="#00ff00"/><rect x="673" y="320" width="1" height="1" fill="#000"/><rect x="676" y="317" width="3" height="1" fill="#00ff00"/><rect x="680" y="319" width="3" height="1" fill="#00ff00"/><rect x="684" y="315" width="3" height="3" fill="#00ff00"/><rect x="685" y="316" width="1" height="1" fill="#000"/><rect x="688" y="317" width="3" height="12" fill="#00ff00"/><rect x="689" y="318" width="1" height="10" fill="#fff"/><rect x="692" y="310" width="3" height="21" fill="#00ff00"/><rect x="693" y="311" width="1" height="19" fill="#000"/><rect x="696" y="312" width="3" height="5" fill="#00ff00"/><rect x="697" y="313" width="1" height="3" fill="#fff"/><rect x="700" y="320" width="3" height="1" fill="#00ff00"/><rect x="704" y="317" width="3" height="11" fill="#00ff00"/><rect x="705" y="318" width="1" height="9" fill="#fff"/><rect x="708" y="322" width="3" height="5" fill="#00ff00"/><rect x="709" y="323" width="1" height="3" fill="#000"/><rect x="712" y="326" width="3" height="28" fill="#00ff00"/><rect x="713" y="327" width="1" height="26" fill="#fff"/><rect x="716" y="351" width="3" height="1" fill="#00ff00"/><rect x="720" y="322" width="3" height="32" fill="#00ff00"/><rect x="721" y="323" width="1" height="30" fill="#000"/><rect x="724" y="324" width="3" height="32" fill="#00ff00"/><rect x="725" y="325" width="1" height="30" fill="#fff"/><rect x="728" y="360" width="3" height="17" fill="#00ff00"/><rect x="729" y="361" width="1" height="15" fill="#fff"/><rect x="732" y="344" width="3" height="32" fill="#00ff00"/><rect x="733" y="345" width="1" height="30" fill="#000"/><rect x="736" y="347" width="3" height="4" fill="#00ff00"/><rect x="737" y="348" width="1" height="2" fill="#fff"/><rect x="740" y="328" width="3" height="26" fill="#00ff00"/><rect x="741" y="329" width="1" height="24" fill="#000"/><rect x="744" y="284" width="3" height="43" fill="#00ff00"/><rect x="745" y="285" width="1" height="41" fill="#000"/><rect x="748" y="250" width="3" height="34" fill="#00ff00"/><rect x="749" y="251" width="1" height="32" fill="#000"/><rect x="752" y="248" width="3" height="25" fill="#00ff00"/><rect x="753" y="249" width="1" height="23" fill="#fff"/><rect x="756" y="266" width="3" height="5" fill="#00ff00"/><rect x="757" y="267" width="1" height="3" fill="#000"/><rect x="760" y="241" width="3" height="25" fill="#00ff00"/><rect x="761" y="242" width="1" height="23" fill="#000"/><rect x="764" y="189" width="3" height="51" fill="#00ff00"/><rect x="765" y="190" width="1" height="49" fill="#000"/><rect x="768" y="178" width="3" height="9" fill="#00ff00"/><rect x="769" y="179" width="1" height="7" fill="#000"/><rect x="772" y="180" width="3" height="14" fill="#00ff00"/><rect x="773" y="181" width="1" height="12" fill="#fff"/><rect x="776" y="176" width="3" height="18" fill="#00ff00"/><rect x="777" y="177" width="1" height="16" fill="#000"/><rect x="780" y="117" width="3" height="61" fill="#00ff00"/><rect x="781" y="118" width="1" height="59" fill="#000"/><rect x="784" y="119" width="3" height="7" fill="#00ff00"/><rect x="785" y="120" width="1" height="5" fill="#fff"/><rect x="991" y="110" width="2" height="1" fill="#fff"/><rect x="991" y="146" width="2" height="1" fill="#fff"/><rect x="991" y="182" width="2" height="1" fill="#fff"/><rect x="991" y="218" width="2" height="1" fill="#fff"/><rect x="991" y="254" width="2" height="1" fill="#fff"/><rect x="991" y="290" width="2" height="1" fill="#fff"/><rect x="991" y="326" width="2" height="1" fill="#fff"/><rect x="991" y="362" width="2" height="1" fill="#fff"/><rect x="991" y="398" width="2" height="1" fill="#fff"/><rect x="991" y="434" width="2" height="1" fill="#fff"/><rect x="991" y="470" width="2" height="1" fill="#fff"/><rect x="991" y="506" width="2" height="1" fill="#fff"/><rect x="991" y="542" width="2" height="1" fill="#fff"/><rect x="991" y="578" width="2" height="1" fill="#fff"/><rect x="9" y="589" width="1" height="3" fill="#fff"/><rect x="73" y="589" width="1" height="3" fill="#fff"/><rect x="137" y="589" width="1" height="3" fill="#fff"/><rect x="201" y="589" width="1" height="3" fill="#fff"/><rect x="265" y="589" width="1" height="3" fill="#fff"/><rect x="329" y="589" width="1" height="3" fill="#fff"/><rect x="393" y="589" width="1" height="3" fill="#fff"/><rect x="457" y="589" width="1" height="3" fill="#fff"/><rect x="521" y="589" width="1" height="3" fill="#fff"/><rect x="585" y="589" width="1" height="3" fill="#fff"/><rect x="649" y="589" width="1" height="3" fill="#fff"/><rect x="713" y="589" width="1" height="3" fill="#fff"/><rect x="777" y="589" width="1" height="3" fill="#fff"/><rect x="993" y="120" width="30" height="11" fill="#fff"/></svg><div class="ct" style="left:13px;top:62px">EURGBP,M15&nbsp; 0.9130 0.9131 0.9123 0.9126</div><div class="ct" style="left:14px;top:84px">#35434547 sell</div><div class="ct" style="left:996px;top:82px">0.9135</div><div class="ct" style="left:996px;top:118px">0.9115</div><div class="ct" style="left:996px;top:154px">0.9095</div><div class="ct" style="left:996px;top:190px">0.9075</div><div class="ct" style="left:996px;top:226px">0.9055</div><div class="ct" style="left:996px;top:262px">0.9035</div><div class="ct" style="left:996px;top:298px">0.9015</div><div class="ct" style="left:996px;top:334px">0.8995</div><div class="ct" style="left:996px;top:370px">0.8975</div><div class="ct" style="left:996px;top:406px">0.8955</div><div class="ct" style="left:996px;top:442px">0.8935</div><div class="ct" style="left:996px;top:478px">0.8915</div><div class="ct" style="left:996px;top:514px">0.8895</div><div class="ct" style="left:996px;top:550px">0.8875</div><div class="ct" style="left:996px;top:98px;color:#000">0.9126</div><div class="ct" style="left:8px;top:570px;letter-spacing:-.45px">15 Dec 2008</div><div class="ct" style="left:72px;top:570px;letter-spacing:-.45px">15 Dec 15:00</div><div class="ct" style="left:136px;top:570px;letter-spacing:-.45px">15 Dec 19:00</div><div class="ct" style="left:200px;top:570px;letter-spacing:-.45px">15 Dec 23:00</div><div class="ct" style="left:264px;top:570px;letter-spacing:-.45px">16 Dec 03:00</div><div class="ct" style="left:328px;top:570px;letter-spacing:-.45px">16 Dec 07:00</div><div class="ct" style="left:392px;top:570px;letter-spacing:-.45px">16 Dec 11:00</div><div class="ct" style="left:456px;top:570px;letter-spacing:-.45px">16 Dec 15:00</div><div class="ct" style="left:520px;top:570px;letter-spacing:-.45px">16 Dec 19:00</div><div class="ct" style="left:584px;top:570px;letter-spacing:-.45px">16 Dec 23:00</div><div class="ct" style="left:648px;top:570px;letter-spacing:-.45px">17 Dec 03:00</div><div class="ct" style="left:712px;top:570px;letter-spacing:-.45px">17 Dec 07:00</div><div class="ct" style="left:776px;top:570px;letter-spacing:-.45px">17 Dec 11:00</div><div class="abs" style="left:4px;top:584px;width:1019px;height:148px;background:#ece9d8;border-top:2px solid #fff"></div><div class="abs" style="left:5px;top:728px;width:1018px;height:2px;background:#fcfbf7"></div><div class="abs" style="left:5px;top:730px;width:1018px;height:2px;background:#e4e0cd"></div><svg class="abs" style="left:7px;top:591px" width="8" height="8"><path d="M1.500 1.500l5 4.500M6.500 1.500l-5 4.500" stroke="#000" stroke-width="1.900" fill="none"/></svg><div class="abs" style="left:5px;top:603px;width:13px;height:125px;background:linear-gradient(#9db9eb,#86a2e2 60%,#7d99de)"></div><div class="abs" style="left:5px;top:698px;width:13px;height:26px;overflow:hidden"><div style="position:absolute;left:-6.5px;top:6px;width:26px;height:14px;transform:rotate(-90deg);font:11px/14px 'Liberation Sans','Noto Sans CJK SC',sans-serif;color:#d5e0f8;white-space:nowrap;text-align:left">终端</div></div><div class="abs" style="left:19px;top:589px;width:1004px;height:118px;background:#fff;border-left:1px solid #aca899;border-top:1px solid #aca899"></div><div class="abs" style="left:20px;top:590px;width:1003px;height:20px;background:linear-gradient(#fff 0,#fff 1px,#ece9d8 1px,#ece9d8 17px,#e0dccb 17px,#e0dccb 18px,#d2cebd 18px,#d2cebd 19px,#c3bfad 19px)"></div><div class="th" style="left:20px;width:99px;text-align:left;padding-left:9px">定单</div><div class="th" style="left:119px;width:169px">时间</div><div class="th" style="left:288px;width:69px">类型</div><div class="th" style="left:357px;width:53px">手数</div><div class="th" style="left:410px;width:69px">商品</div><div class="th" style="left:479px;width:76px;padding-right:23px">价位<svg style="position:absolute;right:2px;top:6px" width="9" height="8"><path d="M.5 7.5L4.5.5" stroke="#aca899" fill="none"/><path d="M4.5.5L8.5 7.5H.5" stroke="#fff" fill="none"/></svg></div><div class="th" style="left:555px;width:76px">止损</div><div class="th" style="left:631px;width:77px">获利</div><div class="th" style="left:708px;width:76px">价位</div><div class="th" style="left:784px;width:75px">佣金</div><div class="th" style="left:859px;width:76px">利息</div><div class="th" style="left:935px;width:93px">获利</div><div class="row" style="top:610px;background:#316ac5;color:#fff"><div class="td" style="left:1px;width:99px"></div><div class="td" style="left:100px;width:169px"><b class="d">2008</b><b class="d p">.</b><b class="d">12</b><b class="d p">.</b><b class="d">17</b><b class="d p"> </b><b class="d">11</b><b class="d c">:</b><b class="d">30</b></div><div class="td" style="left:269px;width:69px">sell</div><div class="td" style="left:338px;width:53px"><b class="d">2</b><b class="d p">.</b><b class="d">00</b></div><div class="td" style="left:391px;width:69px">eurgbp</div><div class="td" style="left:460px;width:76px"><b class="d">0</b><b class="d p">.</b><b class="d">9131</b></div><div class="td" style="left:536px;width:76px"><b class="d">0</b><b class="d p">.</b><b class="d">9258</b></div><div class="td" style="left:612px;width:77px"><b class="d">0</b><b class="d p">.</b><b class="d">0000</b></div><div class="td" style="left:689px;width:76px"><b class="d">0</b><b class="d p">.</b><b class="d">9129</b></div><div class="td" style="left:765px;width:75px"><b class="d">0</b><b class="d p">.</b><b class="d">00</b></div><div class="td" style="left:840px;width:76px"><b class="d">0</b><b class="d p">.</b><b class="d">00</b></div><div class="td" style="left:916px;width:93px"><b class="d">61</b><b class="d p">.</b><b class="d">70</b></div></div><div class="row" style="top:630px;background:#ebebeb;color:#000"><div class="td" style="left:1px;width:99px"></div><div class="td" style="left:100px;width:169px"><b class="d">2008</b><b class="d p">.</b><b class="d">12</b><b class="d p">.</b><b class="d">16</b><b class="d p"> </b><b class="d">16</b><b class="d c">:</b><b class="d">47</b></div><div class="td" style="left:269px;width:69px">sell</div><div class="td" style="left:338px;width:53px"><b class="d">1</b><b class="d p">.</b><b class="d">00</b></div><div class="td" style="left:391px;width:69px">usdchf</div><div class="td" style="left:460px;width:76px"><b class="d">1</b><b class="d p">.</b><b class="d">1473</b></div><div class="td" style="left:536px;width:76px"><b class="d">1</b><b class="d p">.</b><b class="d">1407</b></div><div class="td" style="left:612px;width:77px"><b class="d">0</b><b class="d p">.</b><b class="d">0000</b></div><div class="td" style="left:689px;width:76px"><b class="d">1</b><b class="d p">.</b><b class="d">1140</b></div><div class="td" style="left:765px;width:75px"><b class="d">0</b><b class="d p">.</b><b class="d">00</b></div><div class="td" style="left:840px;width:76px"><b class="d m">-</b><b class="d">2</b><b class="d p">.</b><b class="d">41</b></div><div class="td" style="left:916px;width:93px"><b class="d">2</b><b class="d p"> </b><b class="d">989</b><b class="d p">.</b><b class="d">23</b></div></div><div class="row" style="top:650px;background:#ffffff;color:#000"><div class="td" style="left:1px;width:99px"></div><div class="td" style="left:100px;width:169px"><b class="d">2008</b><b class="d p">.</b><b class="d">12</b><b class="d p">.</b><b class="d">16</b><b class="d p"> </b><b class="d">16</b><b class="d c">:</b><b class="d">52</b></div><div class="td" style="left:269px;width:69px">sell</div><div class="td" style="left:338px;width:53px"><b class="d">1</b><b class="d p">.</b><b class="d">00</b></div><div class="td" style="left:391px;width:69px">usdchf</div><div class="td" style="left:460px;width:76px"><b class="d">1</b><b class="d p">.</b><b class="d">1484</b></div><div class="td" style="left:536px;width:76px"><b class="d">1</b><b class="d p">.</b><b class="d">1407</b></div><div class="td" style="left:612px;width:77px"><b class="d">0</b><b class="d p">.</b><b class="d">0000</b></div><div class="td" style="left:689px;width:76px"><b class="d">1</b><b class="d p">.</b><b class="d">1140</b></div><div class="td" style="left:765px;width:75px"><b class="d">0</b><b class="d p">.</b><b class="d">00</b></div><div class="td" style="left:840px;width:76px"><b class="d m">-</b><b class="d">2</b><b class="d p">.</b><b class="d">41</b></div><div class="td" style="left:916px;width:93px"><b class="d">3</b><b class="d p"> </b><b class="d">087</b><b class="d p">.</b><b class="d">97</b></div></div><div class="abs" style="left:20px;top:630px;width:1003px;height:1px;background:#c6c6c6"></div><div class="abs" style="left:20px;top:650px;width:1003px;height:1px;background:#c0c0c0"></div><div class="row" style="top:670px;background:#c0c0c0;font:bold 10px/22px 'Liberation Mono','Noto Sans CJK SC',monospace;letter-spacing:1px"><div class="abs" style="left:4px;top:3px;width:12px;height:11px;background:#fff;border:1px solid #8e8f8f"></div><div class="abs" style="left:537px;top:-1px;white-space:pre;font:bold 11px/22px 'Liberation Sans','Noto Sans CJK SC',sans-serif;letter-spacing:1px">保证金比例</div><div class="abs" style="left:597px;top:0;white-space:pre"><b class="d e c">:</b><b class="d e p"> </b><b class="d e">231</b><b class="d e p">.</b><b class="d e">20</b><span style="position:relative;top:-2px">%</span></div><div class="abs" style="left:948px;top:0;white-space:pre"><b class="d e">6</b><b class="d e p"> </b><b class="d e">134</b><b class="d e p">.</b><b class="d e">08</b></div></div><div class="blob" style="left:17px;top:612px;width:97px;height:17px;border-radius:9px"></div><div class="blob" style="left:18px;top:633px;width:89px;height:16px;border-radius:8px"></div><div class="blob" style="left:18px;top:653px;width:92px;height:17px;border-radius:8px"></div><div class="blob" style="left:18px;top:675px;width:112px;height:17px;border-radius:8px 0 0 8px"></div><div class="blob" style="left:128px;top:674px;width:104px;height:17px;border-radius:0"></div><div class="blob" style="left:230px;top:673.5px;width:106px;height:16.0px;border-radius:0"></div><div class="blob" style="left:334px;top:673px;width:104px;height:15.5px;border-radius:0"></div><div class="blob" style="left:436px;top:671.5px;width:112px;height:16.5px;border-radius:0 8px 8px 0"></div><div class="blob" style="left:49px;top:673px;width:19px;height:4px;border-radius:2px"></div><div class="blob" style="left:238px;top:673px;width:12px;height:3px;border-radius:1px"></div><div class="abs" style="left:19px;top:707px;width:1004px;height:1px;background:#000"></div><div class="abs" style="left:22px;top:707px;width:44px;height:18px;background:#fff;border:1px solid #000;border-top:0;box-shadow:1px 1px 0 #55534b"></div><div class="tab" style="left:31px;color:#000">交易</div><div class="tab" style="left:75.5px">账户历史</div><div class="tab" style="left:143.5px">警报</div><div class="tab" style="left:187px">邮箱</div><div class="tab" style="left:233px">日志</div><div class="abs" style="left:134px;top:711px;width:1px;height:12px;background:#808080"></div><div class="abs" style="left:178px;top:711px;width:1px;height:12px;background:#808080"></div><div class="abs" style="left:222px;top:711px;width:1px;height:12px;background:#808080"></div><div class="abs" style="left:266px;top:711px;width:1px;height:12px;background:#808080"></div></div></body></html>
